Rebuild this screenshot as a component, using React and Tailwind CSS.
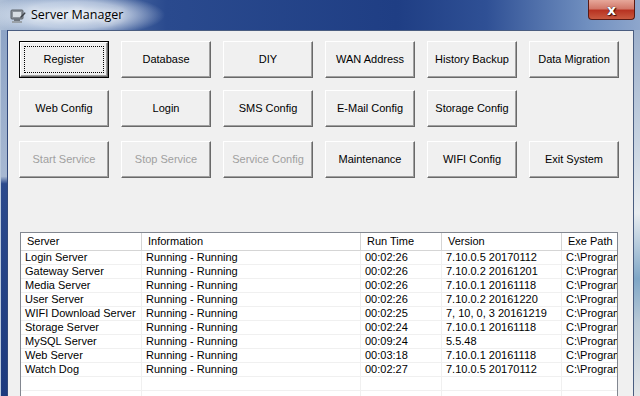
import React from 'react'

const BUTTONS = [
  [
    { label: 'Register', isDefault: true },
    { label: 'Database' },
    { label: 'DIY' },
    { label: 'WAN Address' },
    { label: 'History Backup' },
    { label: 'Data Migration' },
  ],
  [
    { label: 'Web Config' },
    { label: 'Login' },
    { label: 'SMS Config' },
    { label: 'E-Mail Config' },
    { label: 'Storage Config' },
  ],
  [
    { label: 'Start Service', disabled: true },
    { label: 'Stop Service', disabled: true },
    { label: 'Service Config', disabled: true },
    { label: 'Maintenance' },
    { label: 'WIFI Config' },
    { label: 'Exit System' },
  ],
]

const COLUMNS = [
  { title: 'Server', w: 'w-[121px]' },
  { title: 'Information', w: 'w-[219px]' },
  { title: 'Run Time', w: 'w-[81px]' },
  { title: 'Version', w: 'w-[120px]' },
  { title: 'Exe Path', w: 'w-[120px]' },
]

const ROWS = [
  ['Login Server', 'Running - Running', '00:02:26', '7.10.0.5 20170112'],
  ['Gateway Server', 'Running - Running', '00:02:26', '7.10.0.2 20161201'],
  ['Media Server', 'Running - Running', '00:02:26', '7.10.0.1 20161118'],
  ['User Server', 'Running - Running', '00:02:26', '7.10.0.2 20161220'],
  ['WIFI Download Server', 'Running - Running', '00:02:25', '7, 10, 0, 3 20161219'],
  ['Storage Server', 'Running - Running', '00:02:24', '7.10.0.1 20161118'],
  ['MySQL Server', 'Running - Running', '00:09:24', '5.5.48'],
  ['Web Server', 'Running - Running', '00:03:18', '7.10.0.1  20161118'],
  ['Watch Dog', 'Running - Running', '00:02:27', '7.10.0.5 20170112'],
]

function WinButton({ label, isDefault, disabled }) {
  const face = (
    <div className="relative w-full h-full bg-[#f0f0f0] border-t border-l border-t-white border-l-white border-r border-b border-r-[#696969] border-b-[#696969] shadow-[inset_-1px_-1px_0_#a0a0a0] flex items-center justify-center">
      <span className={disabled ? 'text-[#a0a0a0]' : 'text-black'}>{label}</span>
      {isDefault && <div className="absolute inset-[3px] border border-dotted border-black" />}
    </div>
  )
  if (isDefault) {
    return <div className="w-[90px] h-[37px] border border-black">{face}</div>
  }
  return <div className="w-[90px] h-[37px]">{face}</div>
}

function AppIcon() {
  return (
    <svg width="16" height="16" viewBox="0 0 16 16">
      <rect x="1" y="2" width="12" height="9" rx="1" fill="#8d949c" stroke="#5b6168" strokeWidth="1" />
      <rect x="3" y="4" width="8" height="5" fill="#d7dde3" />
      <rect x="4" y="11" width="6" height="2" fill="#6f767e" />
      <rect x="2" y="13" width="10" height="2" fill="#9aa1a8" />
      <path d="M10 9 L15 4 L15.5 5.5 L11 10 Z" fill="#3a3f45" />
    </svg>
  )
}

export default function App() {
  return (
    <div
      className="w-[640px] h-[396px] overflow-hidden flex flex-col bg-[#1f3d82] text-[11px] leading-none"
      style={{ fontFamily: '"Liberation Sans", Arial, sans-serif' }}
    >
      {/* Barre de titre */}
      <div className="h-[30px] flex items-center relative bg-[radial-gradient(ellipse_90px_22px_at_75px_15px,rgba(235,242,250,0.95),rgba(235,242,250,0.6)_60%,transparent),linear-gradient(90deg,#aebfd6_0%,#6d89b7_10%,#2a4a8e_26%,#1f3e84_62%,#2f5095_76%,#7190c0_92%,#8ea6cc_100%)]">
        <div className="ml-[10px] mt-[2px]">
          <AppIcon />
        </div>
        <span
          className="ml-[5px] mt-[1px] text-[12.5px] text-black [text-shadow:0_0_6px_#fff,0_0_10px_#fff]"
          style={{ fontFamily: '"Open Sans", "Noto Sans", sans-serif' }}
        >
          Server Manager
        </span>
        <div className="absolute right-[5px] top-0 w-[47px] h-[20px] rounded-b-[4px] border border-[#5a1a14] border-t-0 bg-[linear-gradient(180deg,#e6a79a_0%,#d2786a_45%,#b83322_55%,#c95a40_100%)] flex items-center justify-center">
          <span className="text-white font-bold text-[14px] leading-none [text-shadow:0_0_1px_#000,1px_1px_1px_#3a0a05]" style={{ fontFamily: '"DejaVu Sans", sans-serif' }}>
            x
          </span>
        </div>
      </div>

      <div className="flex flex-1 min-h-0">
        {/* Bord gauche */}
        <div className="w-[8px] border-l border-l-[#b9c8dc] border-r border-r-[#31487a] bg-[linear-gradient(180deg,#8ea4c6_0%,#a7b8d2_40%,#2c4a8c_42%,#1d3a7e_100%)]" />

        {/* Zone client */}
        <div className="w-[626px] bg-[#f0f0f0] border-t border-t-[#4a5d80] border-r border-r-[#4a5d80] flex flex-col pl-[11px] pt-[10px]">
          <div className="flex flex-col gap-[12px]">
            {BUTTONS.map((row, i) => (
              <div key={i} className={`flex gap-[12px] ${i === 2 ? 'mt-[2px]' : ''}`}>
                {row.map((b) => (
                  <WinButton key={b.label} {...b} />
                ))}
              </div>
            ))}
          </div>

          {/* Liste des serveurs */}
          <div className="mt-[54px] ml-px w-[598px] flex-1 border-t border-l border-t-[#828790] border-l-[#828790] border-r border-r-[#828790] bg-white overflow-hidden">
            <div className="flex h-[18px] border-b border-b-[#d5d5d5] bg-white">
              {COLUMNS.map((c) => (
                <div key={c.title} className={`${c.w} shrink-0 h-full flex items-center pl-[6px] border-r border-r-[#d5d5d5]`}>
                  {c.title}
                </div>
              ))}
            </div>
            {[...ROWS, ['', '', '', ''], ['', '', '', '']].map((r, i) => (
              <div key={i} className="flex h-[14px] border-b border-b-[#f0f0f0]">
                {[...r, r[0] ? 'C:\\Program Files\\Server' : ''].map((cell, j) => (
                  <div key={j} className={`${COLUMNS[j].w} shrink-0 h-full flex items-center pl-[4px] border-r border-r-[#f0f0f0] whitespace-nowrap overflow-hidden`}>
                    {cell}
                  </div>
                ))}
              </div>
            ))}
          </div>
        </div>

        {/* Fond flou à droite */}
        <div className="w-[6px] bg-[linear-gradient(180deg,#9db0cc_0%,#c6d2e0_30%,#e8ecef_50%,#7fa6c6_68%,#b9c9d6_80%,#e4e6e8_100%)]" />
      </div>
    </div>
  )
}
